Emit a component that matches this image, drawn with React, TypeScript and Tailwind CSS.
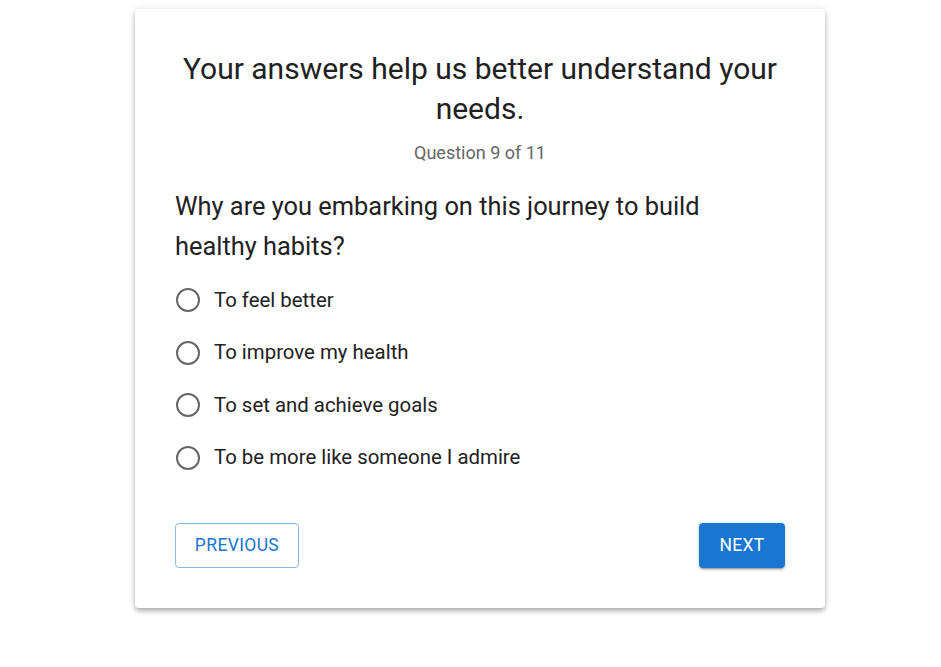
import { useState } from "react";

const options = [
  "To feel better",
  "To improve my health",
  "To set and achieve goals",
  "To be more like someone I admire"
];

export default function App() {
  const [selected, setSelected] = useState<number | null>(null);

  return (
    <div className="min-h-[667px] bg-white pt-[9px] font-['Roboto','Liberation_Sans',sans-serif] text-[#212121]">
      <div className="ml-[135px] w-[690px] rounded-[4px] bg-white px-10 pb-10 pt-10 shadow-[0_2px_4px_-1px_rgba(0,0,0,0.2),0_4px_5px_0_rgba(0,0,0,0.14),0_1px_10px_0_rgba(0,0,0,0.12)]">
        <h1 className="text-center text-[30px] leading-[40px]">
          Your answers help us better understand your needs.
        </h1>
        <p className="mt-3 text-center text-[18px] leading-6 text-[#666]">Question 9 of 11</p>

        <h2 className="mt-[21px] text-[25.4px] leading-[40px]">
          Why are you embarking on this journey to build healthy habits?
        </h2>

        <div className="mt-[13px] flex flex-col gap-[10.5px]">
          {options.map((option, index) => (
            <label
              key={option}
              className="flex h-[42px] cursor-pointer items-center gap-[14px]"
              onClick={() => setSelected(index)}
            >
              <span className="ml-px flex h-6 w-6 items-center justify-center rounded-full border-[2.3px] border-[#666]">
                {selected === index && <span className="h-3 w-3 rounded-full bg-[#1976d2]" />}
              </span>
              <span className="text-[20.4px]">{option}</span>
            </label>
          ))}
        </div>

        <div className="mt-[44px] flex items-center justify-between">
          <button
            type="button"
            className="h-[45px] w-[124px] rounded-[4px] border border-[rgba(25,118,210,0.5)] text-[17.5px] tracking-[0.02em] text-[#1976d2]"
          >
            PREVIOUS
          </button>
          <button
            type="button"
            className="h-[45px] w-[86px] rounded-[4px] bg-[#1976d2] text-[17.5px] tracking-[0.02em] text-white shadow-[0_3px_1px_-2px_rgba(0,0,0,0.2),0_2px_2px_0_rgba(0,0,0,0.14),0_1px_5px_0_rgba(0,0,0,0.12)]"
          >
            NEXT
          </button>
        </div>
      </div>
    </div>
  );
}
